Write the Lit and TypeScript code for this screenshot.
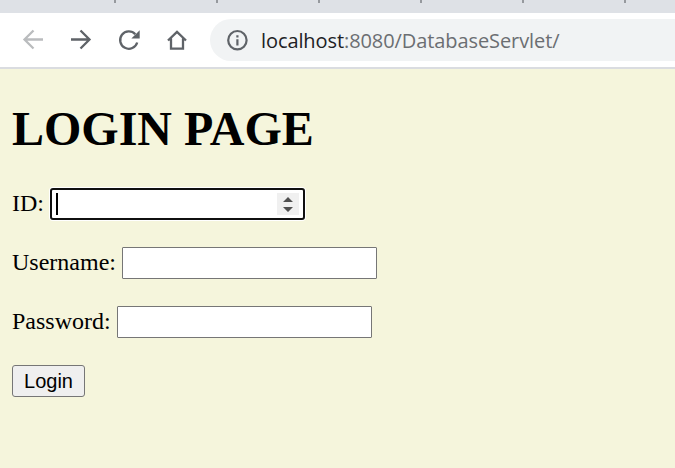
import { LitElement, html, css } from "lit";
import { customElement } from "lit/decorators.js";

@customElement("browser-toolbar")
class BrowserToolbar extends LitElement {
  static styles = css`
    :host { display: block; }
    .tabs { height: 13px; background: #dee1e6; display: flex; padding-left: 114px; gap: 100px; box-sizing: border-box; overflow: hidden; }
    .tick { flex: none; width: 2px; height: 3px; background: #96999e; }
    .bar { height: 54px; background: #fff; border-bottom: 2px solid #dadce0; display: flex; align-items: center; padding-left: 18px; }
    .icon { flex: none; width: 30px; height: 30px; margin-right: 18px; fill: none; stroke: #5f6368; stroke-width: 2.3; }
    .dim { stroke: #babcbe; }
    .solid { fill: #5f6368; stroke: none; }
    .pill { flex: 1; height: 42px; background: #f1f3f4; border-radius: 21px 0 0 21px; display: flex; align-items: center; padding-left: 16px; }
    .info { width: 22px; height: 22px; fill: none; stroke: #5f6368; stroke-width: 2.2; margin-right: 13px; flex: none; }
    .url { font: 20px/42px "Open Sans", sans-serif; letter-spacing: -0.09px; padding-top: 2px; color: #6b6e72; white-space: nowrap; }
    .host { color: #202124; }
  `;
  render() {
    return html`
      <div class="tabs">${[0, 1, 2, 3, 4, 5].map(() => html`<span class="tick"></span>`)}</div>
      <div class="bar">
        <svg class="icon dim" viewBox="0 0 30 30"><path d="M25 14.5H6.5M15.5 5.5l-9 9 9 9"/></svg>
        <svg class="icon" viewBox="0 0 30 30"><path d="M5 14.5h18.5M14.5 5.5l9 9-9 9"/></svg>
        <svg class="icon" viewBox="0 0 30 30"><path d="M21.3 9.2A8.7 8.7 0 1 0 23.2 17.5"/><path class="solid" d="M25.7 5.2V13.5H17.4Z"/></svg>
        <svg class="icon" viewBox="0 0 30 30"><path d="M6 15.5L15 6.8l9 8.7M9 13.5v10.2h12V13.5"/></svg>
        <div class="pill">
          <svg class="info" viewBox="0 0 22 22"><circle cx="11.4" cy="11.2" r="9.2"/><path d="M11.4 6.2v2.3M11.4 10.2v6.2"/></svg>
          <span class="url"><span class="host">localhost</span>:8080/DatabaseServlet/</span>
        </div>
      </div>
    `;
  }
}

@customElement("app-root")
class AppRoot extends LitElement {
  static styles = css`
    :host { display: flex; flex-direction: column; height: 468px; overflow: hidden; background: #f5f5dc; }
    .page { padding: 32px 12px 0; font: 24px/27px "Liberation Serif", serif; color: #000; }
    h1 { font-size: 48px; line-height: 55px; font-weight: 700; margin: 0 0 32px; white-space: nowrap; }
    .row { display: flex; height: 32px; margin-bottom: 27px; gap: 6px; }
    .label { line-height: 31px; white-space: nowrap; }
    .field { box-sizing: border-box; width: 255px; height: 32px; border: 1px solid #767676; border-radius: 1px; background: #fff; outline: none; padding: 0 4px; margin: 0; }
    .focus { border: 2px solid #101010; border-radius: 3px; box-shadow: 0 0 0 1px #fff; display: flex; align-items: center; justify-content: space-between; }
    .caret { width: 2px; height: 22px; background: #000; }
    .spin { width: 22px; height: 22px; background: #f0f0f0; fill: #505050; }
    .login { box-sizing: border-box; width: 73px; height: 32px; border: 1px solid #767676; border-radius: 3px; background: #efefef; font: 20px/30px "Liberation Sans", sans-serif; color: #000; padding: 0; margin: 0; }
  `;
  render() {
    return html`
      <browser-toolbar></browser-toolbar>
      <div class="page">
        <h1>LOGIN PAGE</h1>
        <div class="row"><span class="label">ID:</span>
          <div class="field focus"><span class="caret"></span>
            <svg class="spin" viewBox="0 0 22 22"><path d="M6 9l5-5 5 5ZM6 14h10l-5 5Z"/></svg>
          </div>
        </div>
        <div class="row"><label class="label">Username:</label><input class="field" type="text"></div>
        <div class="row"><label class="label">Password:</label><input class="field" type="password"></div>
        <button class="login">Login</button>
      </div>
    `;
  }
}
